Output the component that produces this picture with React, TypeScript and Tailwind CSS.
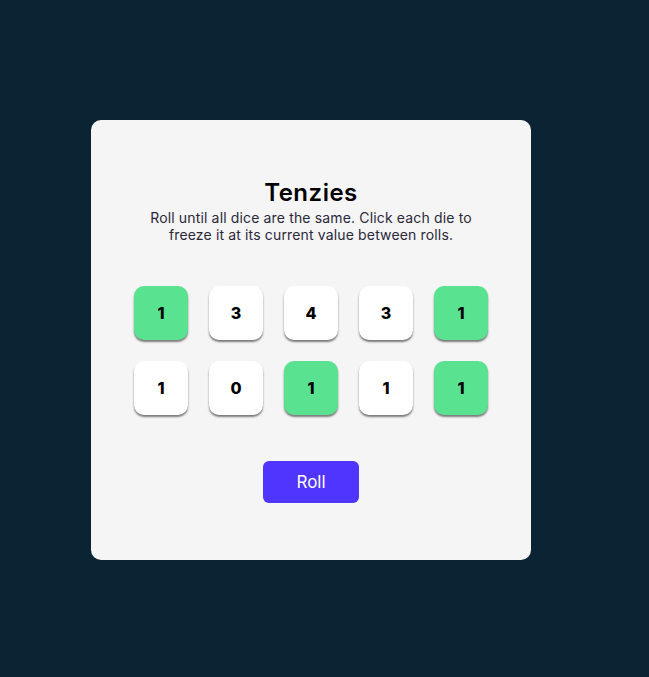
import React from "react";

const dice = [
  { value: 1, held: true },
  { value: 3, held: false },
  { value: 4, held: false },
  { value: 3, held: false },
  { value: 1, held: true },
  { value: 1, held: false },
  { value: 0, held: false },
  { value: 1, held: true },
  { value: 1, held: false },
  { value: 1, held: true },
];

const Die = ({ value, held }: { value: number; held: boolean }) => (
  <button
    className={`w-[54px] h-[54px] rounded-[10px] flex items-center justify-center text-[16px] font-extrabold text-black shadow-[0_2px_2px_rgba(0,0,0,0.5)] ${
      held ? "bg-[#59E391]" : "bg-white"
    }`}
    style={{ fontFamily: "Inter, sans-serif" }}
  >
    {value}
  </button>
);

export default function App() {
  return (
    <div
      className="min-h-screen w-full bg-[#0B2434] pt-[120px] pl-[91px]"
      style={{ fontFamily: "Inter, 'Noto Sans', sans-serif" }}
    >
      <main className="w-[440px] h-[440px] bg-[#F5F5F5] rounded-[10px] flex flex-col items-center">
        <h1 className="mt-[58px] text-[24px] leading-[30px] font-semibold text-black tracking-[0.5px]">
          Tenzies
        </h1>
        <p className="mt-[1px] w-[340px] text-center text-[14px] leading-[17px] tracking-[0.15px] text-[#2B283A]">
          Roll until all dice are the same. Click each die to freeze it at its current value between rolls.
        </p>
        <div className="mt-[43px] grid grid-cols-5 gap-x-[21px] gap-y-[21px]">
          {dice.map((d, i) => (
            <Die key={i} value={d.value} held={d.held} />
          ))}
        </div>
        <button className="mt-[46px] w-[96px] h-[42px] rounded-[6px] bg-[#5035FF] text-white text-[17px] pt-[2px]">
          Roll
        </button>
      </main>
    </div>
  );
}
